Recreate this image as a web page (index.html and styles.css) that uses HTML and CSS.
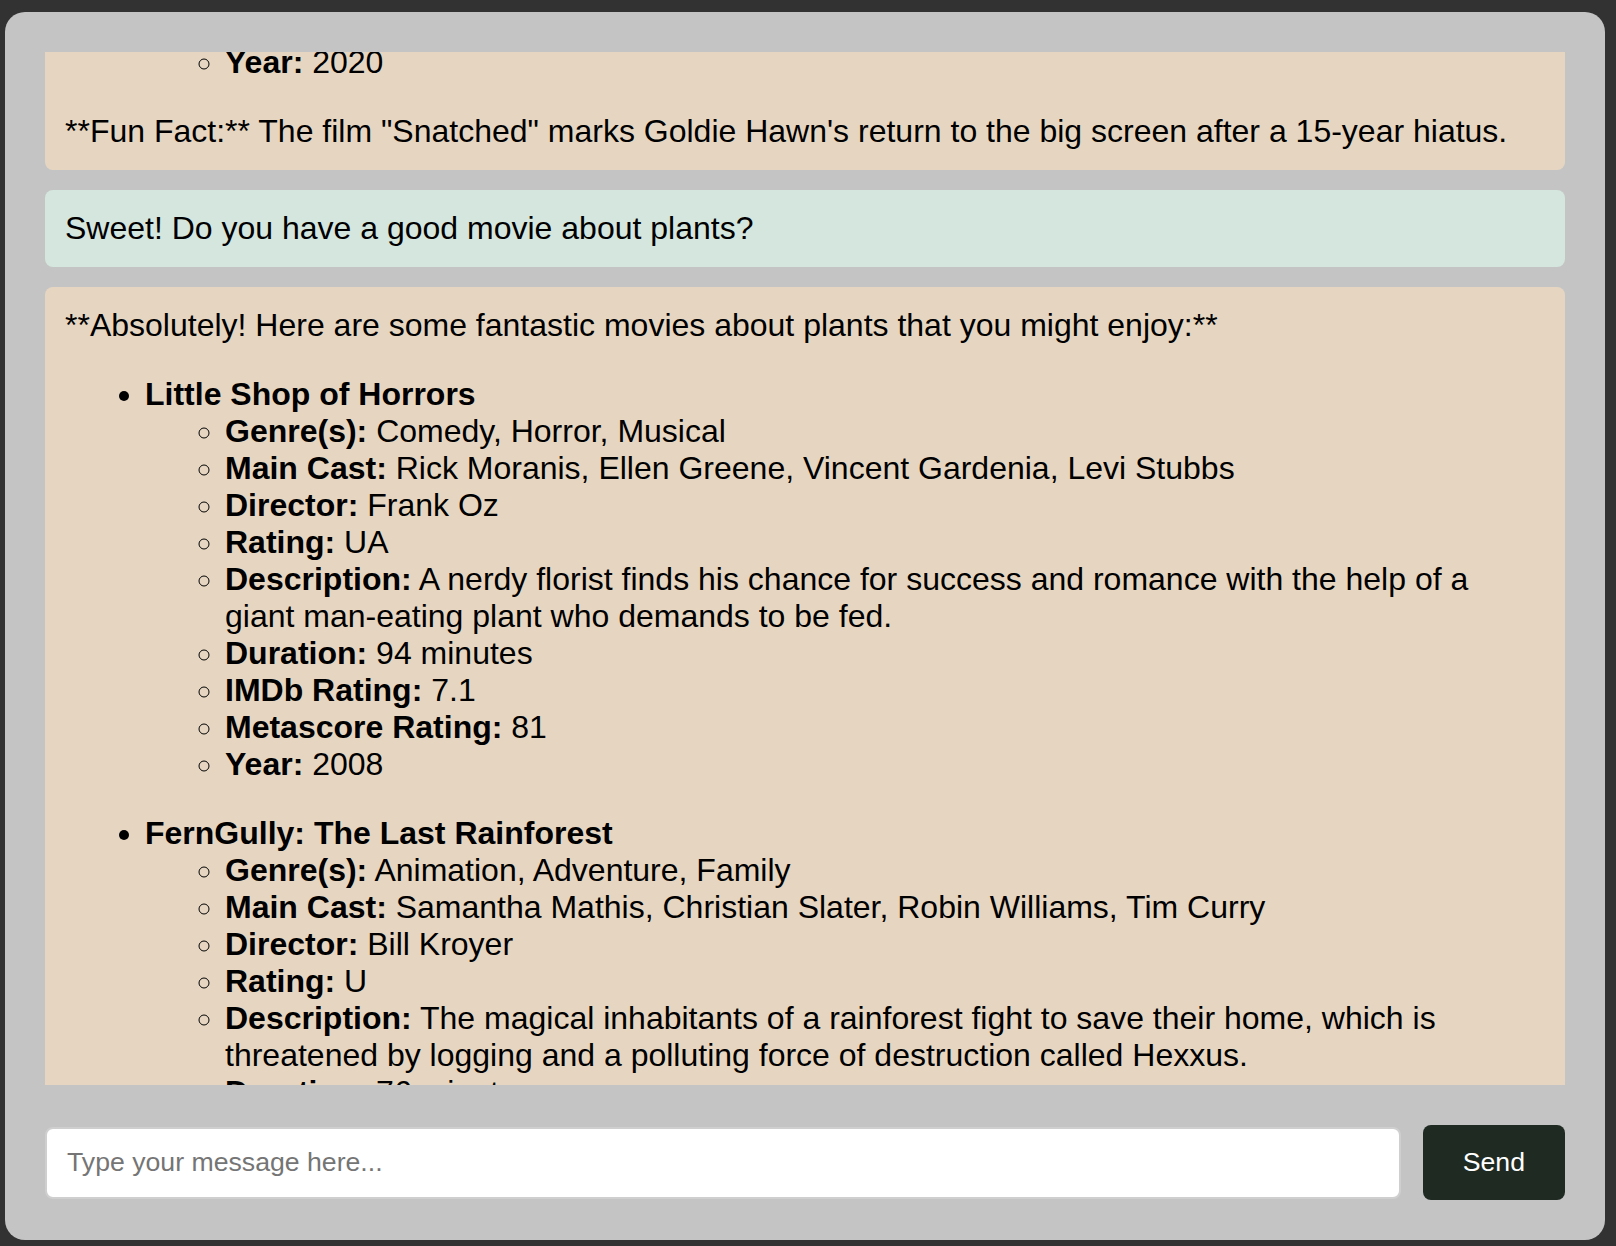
FILE: index.html
```html
<!DOCTYPE html>
<html lang="en">
<head>
<meta charset="utf-8">
<title>Movie Chat</title>
<link rel="stylesheet" href="styles.css">
</head>
<body>
<div class="chat">
  <div class="messages" id="messages">
    <div class="msg user">Can you recommend a funny movie with Goldie Hawn?</div>
    <div class="msg bot">
      <p>**Sure! Here is a hilarious comedy you might enjoy:**</p>
      <ul>
        <li><strong>Snatched</strong>
          <ul>
            <li><strong>Genre(s):</strong> Action, Adventure, Comedy</li>
            <li><strong>Main Cast:</strong> Amy Schumer, Goldie Hawn, Joan Cusack, Ike Barinholtz</li>
            <li><strong>Director:</strong> Jonathan Levine</li>
            <li><strong>Rating:</strong> 15</li>
            <li><strong>Duration:</strong> 90 minutes</li>
            <li><strong>IMDb Rating:</strong> 4.3</li>
            <li><strong>Metascore Rating:</strong> 45</li>
            <li><strong>Year:</strong> 2020</li>
          </ul>
        </li>
      </ul>
      <p>**Fun Fact:** The film "Snatched" marks Goldie Hawn's return to the big screen after a 15-year hiatus.</p>
    </div>
    <div class="msg user" data-anchor>Sweet! Do you have a good movie about plants?</div>
    <div class="msg bot">
      <p>**Absolutely! Here are some fantastic movies about plants that you might enjoy:**</p>
      <ul>
        <li><strong>Little Shop of Horrors</strong>
          <ul>
            <li><strong>Genre(s):</strong> Comedy, Horror, Musical</li>
            <li><strong>Main Cast:</strong> Rick Moranis, Ellen Greene, Vincent Gardenia, Levi Stubbs</li>
            <li><strong>Director:</strong> Frank Oz</li>
            <li><strong>Rating:</strong> UA</li>
            <li><strong>Description:</strong> A nerdy florist finds his chance for success and romance with the help of a giant man-eating plant who demands to be fed.</li>
            <li><strong>Duration:</strong> 94 minutes</li>
            <li><strong>IMDb Rating:</strong> 7.1</li>
            <li><strong>Metascore Rating:</strong> 81</li>
            <li><strong>Year:</strong> 2008</li>
          </ul>
        </li>
        <li><strong>FernGully: The Last Rainforest</strong>
          <ul>
            <li><strong>Genre(s):</strong> Animation, Adventure, Family</li>
            <li><strong>Main Cast:</strong> Samantha Mathis, Christian Slater, Robin Williams, Tim Curry</li>
            <li><strong>Director:</strong> Bill Kroyer</li>
            <li><strong>Rating:</strong> U</li>
            <li><strong>Description:</strong> The magical inhabitants of a rainforest fight to save their home, which is threatened by logging and a polluting force of destruction called Hexxus.</li>
            <li><strong>Duration:</strong> 76 minutes</li>
            <li><strong>IMDb Rating:</strong> 6.5</li>
            <li><strong>Metascore Rating:</strong> 55</li>
            <li><strong>Year:</strong> 1992</li>
          </ul>
        </li>
      </ul>
      <p>**Fun Fact:** Robin Williams improvised much of his dialogue as Batty Koda in "FernGully".</p>
    </div>
  </div>
  <form class="composer">
    <input class="composer-input" type="text" placeholder="Type your message here...">
    <button class="composer-send" type="button">Send</button>
  </form>
</div>
<script src="script.js"></script>
</body>
</html>
```

FILE: styles.css
```css
html, body {
  height: 100%;
}
body {
  margin: 0;
  padding: 12px 11px 6px 5px;
  box-sizing: border-box;
  background: #333233;
  display: flex;
  flex-direction: column;
  font-family: "Liberation Sans", Arial, sans-serif;
}
.chat {
  flex: 1;
  min-height: 0;
  background: #c4c4c4;
  border-radius: 20px;
  padding: 40px;
  display: flex;
  flex-direction: column;
  gap: 40px;
}
.messages {
  flex: 1;
  min-height: 0;
  overflow-y: auto;
  scrollbar-width: none;
  display: flex;
  flex-direction: column;
  gap: 20px;
}
.messages::-webkit-scrollbar {
  display: none;
}
.msg {
  flex: none;
  padding: 20px;
  border-radius: 8px;
  font-size: 32px;
  color: #000;
}
.msg.bot {
  background: #e6d6c1;
}
.msg.user {
  background: #d4e6de;
}
.msg p {
  margin: 32px 0;
}
.msg > :first-child {
  margin-top: 0;
}
.msg > :last-child {
  margin-bottom: 0;
}
.msg ul {
  margin: 32px 0;
  padding-left: 80px;
}
.msg ul ul {
  margin: 0 0 32px;
}
.composer {
  margin: 0;
  display: flex;
  align-items: center;
  gap: 22px;
}
.composer-input {
  flex: 1;
  min-width: 0;
  height: 72px;
  box-sizing: border-box;
  border: 2px solid #cfcfcf;
  border-radius: 8px;
  padding: 0 20px;
  background: #fff;
  font-family: "Liberation Sans", Arial, sans-serif;
  font-size: 26.67px;
  color: #000;
  outline: none;
}
.composer-input::placeholder {
  color: #757575;
}
.composer-send {
  height: 75px;
  padding: 0 40px;
  border: 0;
  border-radius: 8px;
  background: #1f2a23;
  color: #fff;
  font-family: "Liberation Sans", Arial, sans-serif;
  font-size: 26.67px;
}
```

FILE: script.js
```js
(function () {
  var box = document.getElementById('messages');
  var anchor = box.querySelector('[data-anchor]');
  var offset = anchor.getBoundingClientRect().top - box.getBoundingClientRect().top;
  box.scrollTop = box.scrollTop + offset - 138;
})();
```
